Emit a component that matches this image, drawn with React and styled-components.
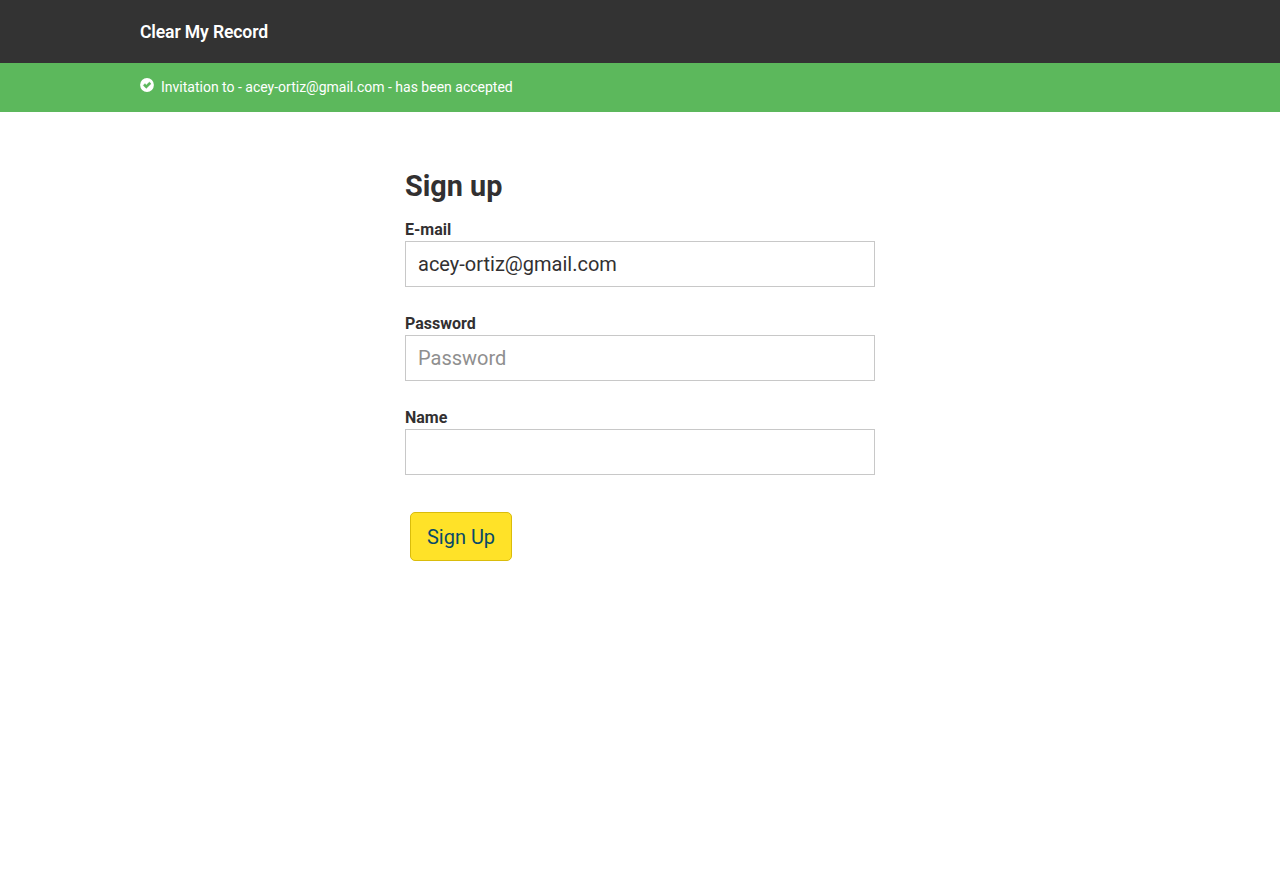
import React from 'react';
import styled, { createGlobalStyle } from 'styled-components';

const GlobalStyle = createGlobalStyle`
  *, *::before, *::after { box-sizing: border-box; }
  body {
    margin: 0;
    background: #fff;
    color: #323031;
    font-family: Roboto, "Liberation Sans", sans-serif;
  }
`;

const Container = styled.div`
  width: 1000px;
  margin: 0 auto;
`;

const Header = styled.header`
  height: 63px;
  padding-top: 22px;
  background: #333;
`;

const Brand = styled.a`
  display: block;
  color: #fff;
  font-size: 17.6px;
  font-weight: 600;
  line-height: 21px;
  letter-spacing: -0.14px;
`;

const Flash = styled.div`
  height: 49px;
  padding-top: 14px;
  background: #5cb85c;
  color: #fff;
`;

const FlashMessage = styled.div`
  display: flex;
  align-items: flex-start;
  gap: 7px;
  font-size: 14px;
  line-height: 20px;
`;

const CheckIcon = styled.svg`
  width: 14px;
  height: 14px;
  margin-top: 1px;
`;

const Form = styled.form`
  width: 470px;
  margin: 0 auto;
  padding-top: 56px;
`;

const Title = styled.h1`
  margin: 0 0 14px;
  font-size: 28.8px;
  font-weight: 700;
  line-height: 36px;
`;

const Field = styled.div`
  margin-bottom: 25px;
`;

const Label = styled.label`
  display: block;
  height: 23px;
  font-size: 16px;
  font-weight: 700;
  line-height: 23px;
`;

const Input = styled.input`
  display: block;
  width: 100%;
  height: 46px;
  padding: 0 12px;
  border: 1px solid #c8c8c8;
  border-radius: 0;
  background: #fff;
  color: #323031;
  font: 400 20px/28px Roboto, "Liberation Sans", sans-serif;
  outline: none;

  &::placeholder { color: #8f8f8f; opacity: 1; }
`;

const SubmitButton = styled.button`
  display: block;
  width: 102px;
  height: 49px;
  margin: 37px 0 0 5px;
  padding: 0;
  border: 1px solid #dabc0b;
  border-radius: 5px;
  background: #ffe228;
  color: #084a68;
  font: 400 20px/28px Roboto, "Liberation Sans", sans-serif;
`;

export default function App() {
  return (
    <>
      <GlobalStyle />
      <Header>
        <Container><Brand>Clear My Record</Brand></Container>
      </Header>
      <Flash>
        <Container>
          <FlashMessage>
            <CheckIcon viewBox="0 0 14 14" aria-hidden="true">
              <circle cx="7" cy="7" r="6.9" fill="#fff" />
              <path d="M3.2 7.4 4.9 5.6 6.3 6.9 9.4 4 11.1 5.7 6.3 10.4Z" fill="#5cb85c" stroke="#5cb85c" strokeWidth="0.3" strokeLinejoin="round" />
            </CheckIcon>
            <span>Invitation to - acey-ortiz@gmail.com - has been accepted</span>
          </FlashMessage>
        </Container>
      </Flash>
      <Form onSubmit={(e) => e.preventDefault()}>
        <Title>Sign up</Title>
        <Field>
          <Label htmlFor="email">E-mail</Label>
          <Input id="email" defaultValue="acey-ortiz@gmail.com" />
        </Field>
        <Field>
          <Label htmlFor="password">Password</Label>
          <Input id="password" type="password" placeholder="Password" />
        </Field>
        <Field>
          <Label htmlFor="name">Name</Label>
          <Input id="name" />
        </Field>
        <SubmitButton>Sign Up</SubmitButton>
      </Form>
    </>
  );
}
